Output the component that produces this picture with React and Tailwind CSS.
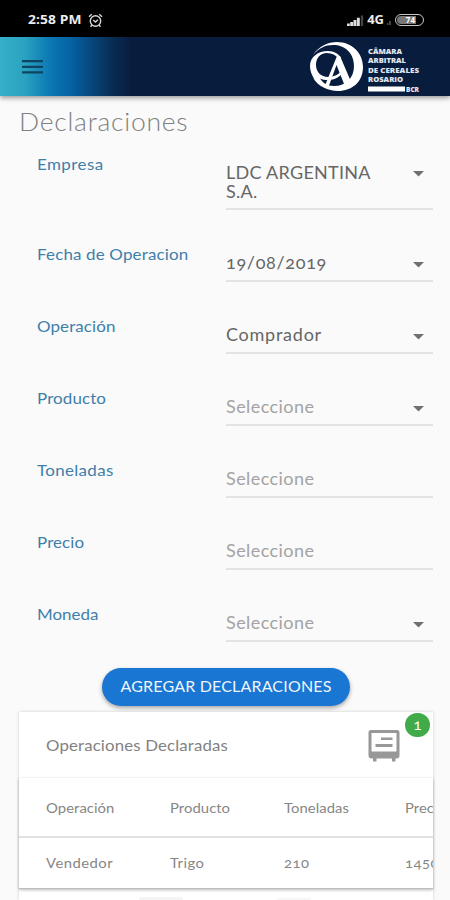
const FIELDS = [
  { label: 'Empresa', value: 'LDC ARGENTINA S.A.', filled: true, arrow: true, labelTrack: 'tracking-[0.4px]', track: 'tracking-[0.25px]', tall: true },
  { label: 'Fecha de Operacion', value: '19/08/2019', filled: true, arrow: true, labelTrack: 'tracking-[0.15px]', track: 'tracking-[0.65px]' },
  { label: 'Operación', value: 'Comprador', filled: true, arrow: true, labelTrack: 'tracking-[0.1px]', track: 'tracking-[0.7px]' },
  { label: 'Producto', value: 'Seleccione', arrow: true, labelTrack: 'tracking-[0.1px]', track: 'tracking-[0.4px]' },
  { label: 'Toneladas', value: 'Seleccione', labelTrack: 'tracking-[0.3px]', track: 'tracking-[0.4px]' },
  { label: 'Precio', value: 'Seleccione', labelTrack: 'tracking-[0.1px]', track: 'tracking-[0.4px]' },
  { label: 'Moneda', value: 'Seleccione', arrow: true, labelTrack: 'tracking-[0px]', track: 'tracking-[0.4px]' },
];

function StatusBar() {
  return (
    <div className="flex h-[37px] shrink-0 items-center bg-black pt-[3px] pl-7 pr-[26px] text-[#ececec]">
      <span className="origin-left scale-x-[1.06] font-['Open_Sans',sans-serif] text-[13px] font-bold tracking-[0.1px]">2:58 PM</span>
      <svg className="ml-[9px]" width="15" height="15" viewBox="0 0 15 15" fill="none" stroke="#d8d8d8" strokeWidth="1.4">
        <circle cx="7.5" cy="8" r="5.2" />
        <path d="M1 3.8 3.8 1.3M14 3.8 11.2 1.3M5.2 7l2.3 2 2.4-2.2M3.8 12.2l-1.3 1.5M11.2 12.2l1.3 1.5" />
      </svg>
      <svg className="ml-auto" width="17" height="12" viewBox="0 0 17 12" fill="#dedede">
        <path d="M0 9.500h2.800V12H0zM3.200 8h2.900v4H3.200zM6.500 6h2.900v6H6.500zM9.900 3.800h2.900V12h-2.900z" />
        <path d="M13.800 1.500h2.400V12h-2.400z" fill="#444" />
      </svg>
      <span className="ml-[3px] font-['Open_Sans',sans-serif] text-[13px] font-bold">4G</span>
      <svg className="ml-[3px]" width="4" height="12" viewBox="0 0 4 12" fill="#444"><path d="M0 9h1.500v2H0zM2 7h2v4H2z" /></svg>
      <div className="ml-[4px] flex h-3 w-[29px] items-center rounded-full border-[1.500px] border-[#c8c8c8] p-px">
        <div className="flex h-full w-[19px] items-center justify-end rounded-l-full bg-[#777] pr-[1px] font-['Open_Sans',sans-serif] text-[8px] leading-none font-bold text-white">74</div>
      </div>
    </div>
  );
}

function Logo() {
  return (
    <svg width="112" height="54" viewBox="0 0 112 54" fill="#fff">
      <path fillRule="evenodd" d="M4 14C10 5 19 1 28 1C43 1 54 12 54 26C54 41 43 50 29 50C19 50 9 45 4 37C10 42 17 45 25 45C37 45 45 37 45 25C45 12 36 4 24 4C16 4 10 7 4 14Z" />
      <path fillRule="evenodd" d="M1 25C1 16 9 10 19 10C25 10 30 13 32 17L30 18C27 14 23 12 18 12C11 12 7 17 7 24C7 31 12 36 19 36C25 36 31 33 34 28L35 30C31 36 26 39 19 39C16 39 13 38.500 11 37.500C13 41 16 43 20 45L15 46C7 42 1 34 1 25Z" />
      <path fillRule="evenodd" d="M28 15L31 15L43 43L35.500 44L27.500 24L19.500 46L16 44.500Z" />
      <g fontFamily="Open Sans, sans-serif" fontWeight="800" fontSize="7" fill="#e2e7ef">
        <text x="59" y="13" textLength="34" lengthAdjust="spacingAndGlyphs">CÂMARA</text>
        <text x="59" y="22.300" textLength="38" lengthAdjust="spacingAndGlyphs">ARBITRAL</text>
        <text x="59" y="31.500" textLength="51" lengthAdjust="spacingAndGlyphs">DE CEREALES</text>
        <text x="59" y="40.700" textLength="35" lengthAdjust="spacingAndGlyphs">ROSARIO</text>
      </g>
      <path d="M59 45.500h37v5H59z" />
      <text x="97" y="50.500" fontFamily="Open Sans, sans-serif" fontWeight="800" fontSize="6.500" fill="#e2e7ef" textLength="13" lengthAdjust="spacingAndGlyphs">BCR</text>
    </svg>
  );
}

function Header() {
  return (
    <header className="flex h-[59px] shrink-0 items-start bg-[linear-gradient(90deg,#35b0c8_0px,#2aa2c0_25px,#0b78b5_50px,#0563a4_70px,#07487f_90px,#08294f_115px,#081d3e_132px)] shadow-[0_2px_5px_rgba(0,0,0,0.4)]">
      <svg className="mt-[23px] ml-[22px]" width="21" height="15" viewBox="0 0 21 15" fill="#0c4563">
        <path d="M0 0h21v2.300H0zM0 5.700h21V8H0zM0 11.300h21v2.300H0z" />
      </svg>
      <div className="mt-1 ml-auto mr-[29px]"><Logo /></div>
    </header>
  );
}

function Field({ label, value, filled, arrow, labelTrack, track, tall }) {
  return (
    <div className={'flex justify-between ' + (tall ? 'h-[73px] pt-[18px]' : 'h-[72px] pt-9')}>
      <label className={(tall ? '' : '-mt-px ') + 'origin-left scale-x-[1.06] text-[16px] leading-[18px] text-[#3f7faa] ' + labelTrack}>{label}</label>
      <div className="mt-[9px] flex w-[207px] items-start justify-between border-b-2 border-[#e3e3e3]">
        <span className={(tall ? '' : '-mt-px ') + 'w-[150px] origin-left scale-x-[1.06] text-[17px] leading-[18.5px] oldstyle-nums ' + track + (filled ? ' text-[#666]' : ' text-[#a3a3a3]')}>{value}</span>
        {arrow && (
          <svg className="mt-[7px] mr-[9px]" width="11" height="6" viewBox="0 0 11 6"><path d="M0 0h11L5.500 5.500z" fill="#707070" /></svg>
        )}
      </div>
    </div>
  );
}

function Cells({ cells, className }) {
  return (
    <div className={'grid w-[484px] shrink-0 grid-cols-[124px_114px_121px_125px] items-center pl-[27px] text-[14px] text-[#868686] ' + className}>
      {cells.map((c) => <span key={c} className="origin-left scale-x-[1.06]">{c}</span>)}
    </div>
  );
}

export default function App() {
  return (
    <div className="flex h-[900px] w-[450px] flex-col overflow-hidden bg-[#fafafa] font-['Lato','Liberation_Sans',sans-serif]">
      <StatusBar />
      <Header />
      <main className="flex flex-col pl-[19px] pr-[17px]">
        <h1 className="h-[41px] origin-left scale-x-[1.06] pt-[9px] text-[25px] leading-8 font-light tracking-[0.700px] text-[#808080]">Declaraciones</h1>
        <div className="pl-[18px]">
          {FIELDS.map((f) => <Field key={f.label} {...f} />)}
        </div>
        <button className="mt-[26px] ml-[83px] h-[38px] w-[248px] rounded-full bg-[#1976d2] pb-[2px] text-[16px] tracking-[0.18px] text-[#eef5fc] shadow-[0_2px_4px_rgba(0,0,0,0.35)]">AGREGAR DECLARACIONES</button>
        <section className="mt-1.5 flex h-[188px] flex-col bg-white shadow-[0_0_3px_rgba(0,0,0,0.18)]">
          <div className="flex h-[66px] shrink-0 items-start pl-[27px]">
            <h2 className="mt-[23px] origin-left scale-x-[1.05] text-[16px] leading-5 tracking-[0.150px] text-[#828282]">Operaciones Declaradas</h2>
            <svg className="mt-[18px] ml-auto" width="32" height="32" viewBox="0 0 32 32">
              <path fill="#989898" fillRule="evenodd" d="M3 0h26a2.500 2.500 0 0 1 2.500 2.500v23A3 3 0 0 1 28.500 28.500H27.500V31.500H24V28.500H8.500V31.500H5V28.500H3.500A3 3 0 0 1 .500 25.500V2.500A2.500 2.500 0 0 1 3 0ZM3.500 3V21.500H28.500V3ZM13 7.500H24.500V10H13ZM7.500 14H24.500V17H7.500Z" />
            </svg>
            <span className="mt-px mr-[3px] ml-[5px] flex h-[24px] w-[25px] items-center justify-center rounded-full bg-[#41ab49] pb-px text-[15px] text-white oldstyle-nums">1</span>
          </div>
          <div className="h-[111px] shrink-0 overflow-hidden border-b border-[#bdbdbd] shadow-[0_1px_3px_rgba(0,0,0,0.28)]">
            <Cells className="h-[60px] border-b-2 border-[#e2e2e2] tracking-[0.050px]" cells={['Operación', 'Producto', 'Toneladas', 'Precio']} />
            <Cells className="h-[50px] pb-[2px] tracking-[0.450px] oldstyle-nums" cells={['Vendedor', 'Trigo', '210', '14500']} />
          </div>
          <div className="flex h-[11px] items-end gap-[94px] pl-[120px]">
            <div className="h-[3px] w-[44px] rounded-t-full bg-[#f4f4f4]" />
            <div className="h-[2px] w-[34px] rounded-t-full bg-[#f6f6f6]" />
          </div>
        </section>
      </main>
    </div>
  );
}
